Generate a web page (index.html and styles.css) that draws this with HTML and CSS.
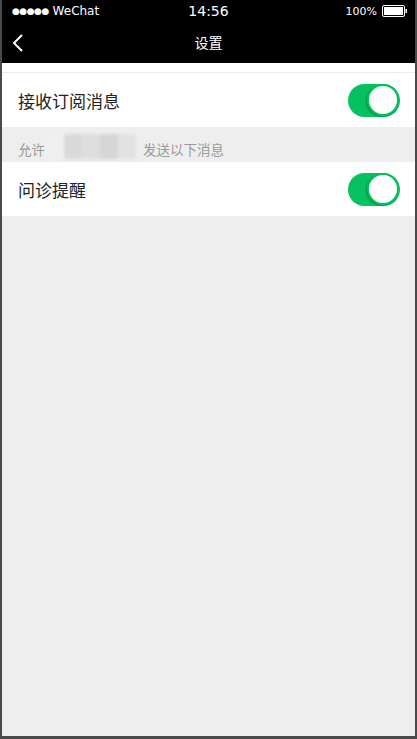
FILE: index.html
```html
<!DOCTYPE html>
<html lang="zh-CN">
<head>
    <meta charset="UTF-8">
    <meta name="viewport" content="width=device-width, initial-scale=1.0">
    <title>设置</title>
    <link rel="stylesheet" href="styles.css">
</head>
<body>
    <div class="phone">
        <div class="status-bar">
            <div class="carrier"><span class="dots">●●●●●</span> WeChat</div>
            <div class="clock">14:56</div>
            <div class="battery">
                <span>100%</span>
                <svg width="26" height="12" viewBox="0 0 26 12">
                    <rect x="0.5" y="0.5" width="22" height="11" rx="1.5" fill="none" stroke="#fff" stroke-width="1"/>
                    <rect x="2" y="2" width="19" height="8" fill="#fff"/>
                    <rect x="23.5" y="4" width="1.5" height="4" fill="#fff"/>
                </svg>
            </div>
        </div>
        <div class="nav-bar">
            <svg class="back" width="12" height="20" viewBox="0 0 12 20">
                <path d="M10 2 L2 10 L10 18" fill="none" stroke="#fff" stroke-width="2"/>
            </svg>
            <div class="title">设置</div>
        </div>

        <div class="top-gap"></div>

        <div class="cell">
            <span class="cell-label">接收订阅消息</span>
            <span class="switch"><span class="knob"></span></span>
        </div>

        <div class="group-tip">
            <span>允许</span>
            <span class="masked">
                <i class="m1"></i><i class="m2"></i><i class="m3"></i><i class="m4"></i><i class="m5"></i>
            </span>
            <span>发送以下消息</span>
        </div>

        <div class="cell">
            <span class="cell-label">问诊提醒</span>
            <span class="switch"><span class="knob"></span></span>
        </div>
    </div>
</body>
</html>
```

FILE: styles.css
```css
body {
    margin: 0;
    background-color: #4a4a4a;
    font-family: "Noto Sans CJK SC", "Liberation Sans", sans-serif;
}

.phone {
    margin: 0 2px;
    height: 736px;
    background-color: #eeeeee;
    overflow: hidden;
}

.status-bar {
    height: 22px;
    background-color: #000;
    color: #fff;
    display: flex;
    align-items: center;
    justify-content: space-between;
    padding: 0 7px 0 10px;
    font-family: "DejaVu Sans", "Liberation Sans", sans-serif;
    font-size: 12px;
    position: relative;
}

.carrier .dots {
    font-size: 9px;
    letter-spacing: -0.5px;
    vertical-align: 1px;
}

.clock {
    position: absolute;
    left: 0;
    right: 0;
    text-align: center;
    font-size: 14px;
    pointer-events: none;
}

.battery {
    display: flex;
    align-items: center;
    gap: 5px;
    font-size: 11px;
}

.nav-bar {
    height: 41px;
    background-color: #000;
    display: flex;
    align-items: center;
    justify-content: center;
    position: relative;
}

.nav-bar .back {
    position: absolute;
    left: 10px;
    top: 11px;
}

.nav-bar .title {
    color: #fff;
    font-size: 14px;
    margin-top: -2px;
}

.top-gap {
    height: 9px;
    background-color: #fff;
    border-bottom: 1px solid #ececec;
}

.cell {
    height: 54px;
    background-color: #fff;
    display: flex;
    align-items: center;
    justify-content: space-between;
    padding: 0 15px 0 16px;
}

.cell-label {
    font-size: 17px;
    color: #222;
}

.switch {
    width: 52px;
    height: 33px;
    border-radius: 17px;
    background-color: #07c160;
    display: flex;
    align-items: center;
    justify-content: flex-end;
    padding-right: 1px;
    box-sizing: border-box;
}

.knob {
    width: 28px;
    height: 28px;
    border-radius: 50%;
    background-color: #fff;
    border: 2px solid #07c160;
    box-shadow: -1px 1px 2px rgba(0, 0, 0, 0.25);
    box-sizing: content-box;
}

.group-tip {
    height: 35px;
    display: flex;
    align-items: flex-end;
    padding: 0 16px 3px;
    box-sizing: border-box;
    font-size: 13.5px;
    color: #9a9a9a;
}

.masked {
    display: flex;
    width: 90px;
    height: 25px;
    margin: 0 7px 0 1px;
    align-self: flex-end;
    filter: blur(1.5px);
}

.masked i {
    flex: 1;
    height: 100%;
}

.m1 { background-color: #f0f0f0; }
.m2 { background-color: #d9d9d9; }
.m3 { background-color: #dedede; }
.m4 { background-color: #d6d6d6; }
.m5 { background-color: #e2e2e2; }
```
